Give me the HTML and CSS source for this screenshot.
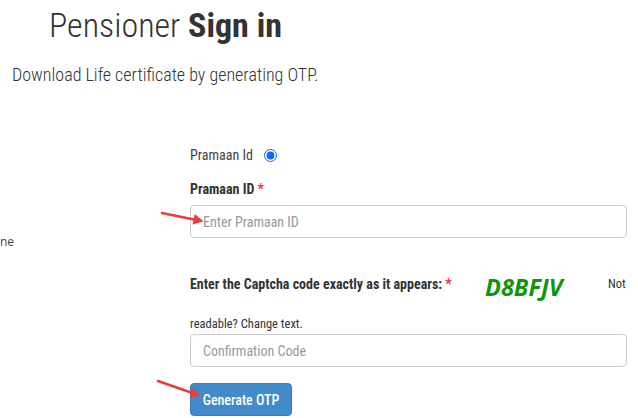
FILE: index.html
```html
<!DOCTYPE html>
<html lang="en">
<head>
<meta charset="utf-8">
<title>Pensioner Sign in</title>
<link rel="stylesheet" href="styles.css">
</head>
<body>
<div class="page">
  <header class="head">
    <h1 class="title">Pensioner <b>Sign in</b></h1>
    <p class="lead">Download Life certificate by generating OTP.</p>
  </header>
  <div class="main">
    <div class="side"><span class="side-text">ne</span></div>
    <form class="form">
      <div class="radio-row">
        <label class="radio-label" for="pid">Pramaan Id</label>
        <input class="radio" type="radio" id="pid" name="mode" checked>
      </div>
      <label class="field-label" for="pramaan">Pramaan ID <span class="req">*</span></label>
      <input class="input" id="pramaan" type="text" placeholder="Enter Pramaan ID">
      <div class="captcha-row">
        <span class="field-label captcha-label">Enter the Captcha code exactly as it appears: <span class="req">*</span></span>
        <span class="captcha">D8BFJV</span>
        <span class="note">Not</span>
      </div>
      <p class="note note-wrap">readable? Change text.</p>
      <input class="input input-conf" type="text" placeholder="Confirmation Code">
      <button class="btn" type="button">Generate OTP</button>
    </form>
  </div>
  <svg class="arrows" width="638" height="418" viewBox="0 0 638 418" aria-hidden="true">
    <line x1="162" y1="213" x2="194" y2="219.4" stroke="#ee3b3b" stroke-width="2.6" stroke-linecap="round"/>
    <polygon points="203.5,221.2 192.6,224.6 194.7,214.1" fill="#ee3b3b"/>
    <line x1="158" y1="381" x2="191" y2="392.6" stroke="#ee3b3b" stroke-width="2.6" stroke-linecap="round"/>
    <polygon points="200.5,396 189.6,397.6 193.2,387.6" fill="#ee3b3b"/>
  </svg>
</div>
</body>
</html>
```
FILE: styles.css
```css
html, body {
  margin: 0;
  padding: 0;
  background: #fff;
}
body {
  font-family: Roboto, "Liberation Sans", sans-serif;
  font-stretch: 75%;
  color: #333;
}
.page {
  position: relative;
  width: 638px;
  height: 418px;
  overflow: hidden;
}
.head {
  display: flex;
  flex-direction: column;
}
.title {
  margin: 0;
  padding: 7px 0 0 49px;
  font-size: 34px;
  line-height: 37px;
  font-weight: 300;
  color: #333;
}
.title b {
  font-weight: 700;
}
.lead {
  margin: 21px 0 0 12px;
  font-size: 18px;
  line-height: 20px;
  font-weight: 300;
  color: #333;
}
.main {
  display: flex;
  margin-top: 60px;
}
.side {
  width: 190px;
  flex: none;
  padding-top: 88px;
  font-family: "Open Sans", sans-serif;
  font-stretch: 100%;
  font-size: 12px;
  line-height: 18px;
  color: #444;
}
.form {
  width: 437px;
  display: flex;
  flex-direction: column;
}
.radio-row {
  display: flex;
  align-items: center;
  height: 20px;
}
.radio-label {
  font-size: 14px;
  line-height: 20px;
  color: #444;
}
.radio {
  margin: 0 0 0 11px;
  width: 13px;
  height: 13px;
  accent-color: #0a6cff;
}
.field-label {
  font-size: 14px;
  line-height: 20px;
  font-weight: 700;
  color: #333;
}
.form > .field-label {
  margin-top: 14px;
}
.req {
  color: #e8333c;
}
.input {
  box-sizing: border-box;
  width: 437px;
  height: 33px;
  margin: 6px 0 0;
  padding: 0 12px;
  border: 1px solid #ccc;
  border-radius: 4px;
  font-family: Roboto, sans-serif;
  font-stretch: 75%;
  font-size: 14px;
  color: #555;
  background: #fff;
}
.input::placeholder {
  color: #999;
}
.captcha-row {
  display: grid;
  grid-template-columns: 295px 123px 1fr;
  align-items: start;
  height: 28px;
  margin-top: 35px;
}
.captcha-label {
  margin-top: 1px;
}
.captcha {
  font-family: "Open Sans", sans-serif;
  font-stretch: 100%;
  font-style: italic;
  font-weight: 700;
  font-size: 23.5px;
  line-height: 28px;
  color: #0c960c;
}
.note {
  font-size: 12.5px;
  line-height: 20px;
  margin-top: 1px;
  color: #333;
}
.note-wrap {
  margin: 14px 0 0;
  line-height: 18px;
}
.input-conf {
  margin-top: 1px;
}
.btn {
  align-self: flex-start;
  box-sizing: border-box;
  width: 102px;
  height: 33px;
  margin-top: 16px;
  padding: 0;
  border: 1px solid #3a7fbd;
  border-radius: 4px;
  background: #428bca;
  color: #fff;
  font-family: Roboto, sans-serif;
  font-stretch: 75%;
  font-size: 14px;
  font-weight: 500;
}
.arrows {
  position: absolute;
  left: 0;
  top: 0;
  pointer-events: none;
}
```
